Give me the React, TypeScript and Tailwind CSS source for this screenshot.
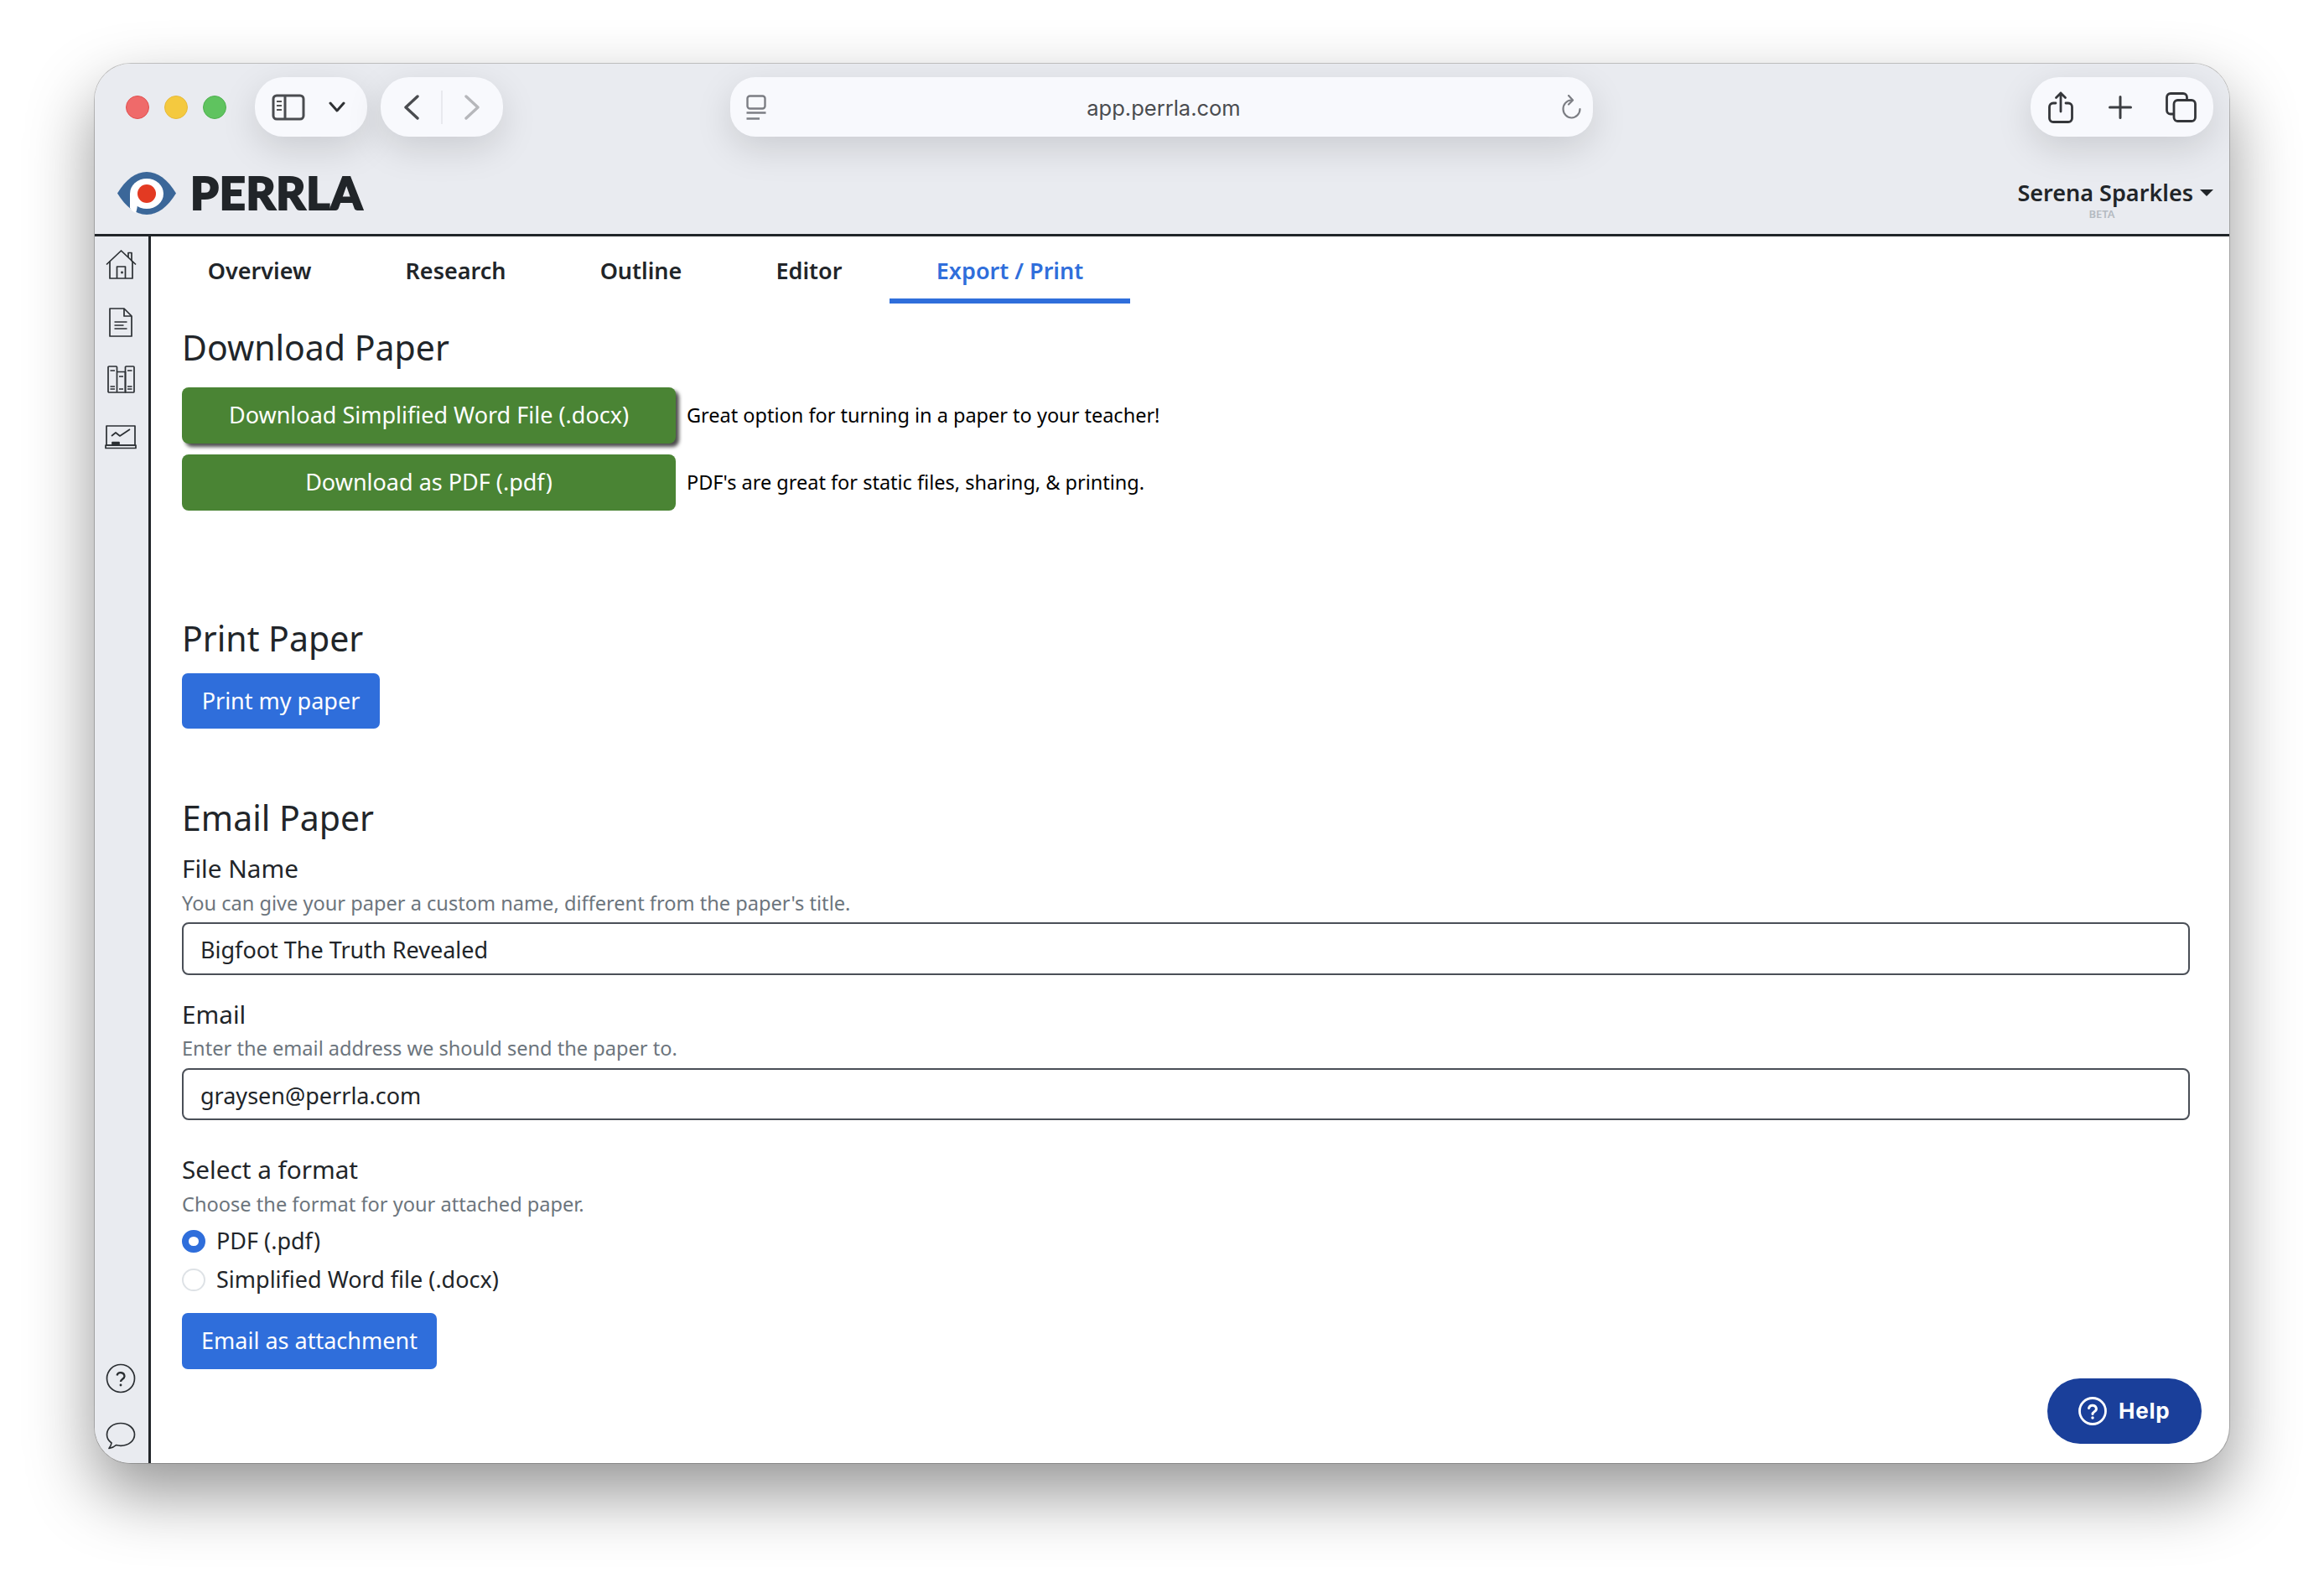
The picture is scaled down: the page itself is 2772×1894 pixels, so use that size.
import React from "react";

const sans = "font-['Noto_Sans','Open_Sans',sans-serif]";

function Dot({ c }: { c: string }) {
  return <div className={`w-[28px] h-[28px] rounded-full ${c}`} />;
}

function SidebarToggle() {
  return (
    <svg width="40" height="32" viewBox="0 0 40 32" fill="none" stroke="#4a4c50" strokeWidth="3">
      <rect x="2" y="2" width="36" height="28" rx="4" />
      <path d="M16 2V30" />
      <path d="M6 9h6M6 14h6M6 19h6" strokeWidth="2" stroke="#555" />
    </svg>
  );
}

function Toolbar() {
  return (
    <div className="flex items-center h-[71px] pl-[37px] mt-[16px]">
      <div className="flex gap-[18px]">
        <Dot c="bg-[#ef6a6a] border border-[#e05050]" />
        <Dot c="bg-[#f4c93f] border border-[#e6b93a]" />
        <Dot c="bg-[#5fc35f] border border-[#4fb04f]" />
      </div>
      <div className="ml-[34px] w-[134px] h-[71px] rounded-[34px] bg-[#f8f9fd] shadow-[0_14px_44px_rgba(0,0,0,0.13)] flex items-center pl-[20px]">
        <SidebarToggle />
        <svg className="ml-[28px]" width="20" height="13" viewBox="0 0 20 13" fill="none" stroke="#2f3134" strokeWidth="3" strokeLinecap="round" strokeLinejoin="round">
          <path d="M2 2l8 9 8-9" />
        </svg>
      </div>
      <div className="ml-[16px] w-[146px] h-[71px] rounded-[34px] bg-[#f8f9fd] shadow-[0_14px_44px_rgba(0,0,0,0.13)] flex items-center pl-[28px]">
        <svg width="18" height="30" viewBox="0 0 18 30" fill="none" stroke="#4a4c50" strokeWidth="3.4" strokeLinecap="round" strokeLinejoin="round">
          <path d="M16 2L2 15l14 13" />
        </svg>
        <div className="ml-[26px] w-[2px] h-[40px] bg-[#e8e9ee]" />
        <svg className="ml-[26px]" width="18" height="30" viewBox="0 0 18 30" fill="none" stroke="#b6b7bb" strokeWidth="3.4" strokeLinecap="round" strokeLinejoin="round">
          <path d="M2 2l14 13L2 28" />
        </svg>
      </div>
      <div className="ml-[271px] w-[1029px] h-[71px] rounded-[30px] bg-[#f8f9fd] shadow-[0_14px_44px_rgba(0,0,0,0.13)] flex items-center justify-between pl-[19px] pr-[14px]">
        <svg width="24" height="30" viewBox="0 0 24 30" fill="none" stroke="#7c7e84" strokeWidth="2.4">
          <rect x="1.5" y="1.5" width="21" height="15" rx="3" />
          <path d="M0.5 21.5H23.5" />
          <path d="M0.5 28.5H16" />
        </svg>
        <span className="font-['Inter',sans-serif] text-[25.5px] text-[#4a4c50] leading-none mt-[3px]">app.perrla.com</span>
        <svg width="24" height="30" viewBox="0 0 24 30" fill="none" stroke="#7c7e84" strokeWidth="2.2" strokeLinecap="round" strokeLinejoin="round">
          <path d="M12 6.500a10 10.500 0 1 0 10.500 10.500" />
          <path d="M9 1l5 5.500-5 5" />
        </svg>
      </div>
      <div className="ml-[522px] w-[218px] h-[71px] rounded-[34px] bg-[#f8f9fd] shadow-[0_14px_44px_rgba(0,0,0,0.13)] flex items-center pl-[21px]">
        <svg width="30" height="38" viewBox="0 0 30 38" fill="none" stroke="#34363a" strokeWidth="2.8" strokeLinecap="round" strokeLinejoin="round">
          <path d="M9 14H6a4.500 4.500 0 0 0-4.500 4.500V32A4.500 4.500 0 0 0 6 36.500h18a4.500 4.500 0 0 0 4.500-4.500V18.500A4.500 4.500 0 0 0 24 14h-3" />
          <path d="M15 24V2M9.500 7.500L15 2l5.500 5.500" />
        </svg>
        <svg className="ml-[42px]" width="28" height="28" viewBox="0 0 28 28" fill="none" stroke="#3c3e42" strokeWidth="3" strokeLinecap="round">
          <path d="M14 1.500V26.500M1.500 14H26.500" />
        </svg>
        <svg className="ml-[40px]" width="37" height="36" viewBox="0 0 37 36" fill="none" stroke="#34363a" strokeWidth="2.8">
          <path d="M9 26H6a4.500 4.500 0 0 1-4.500-4.500V6A4.500 4.500 0 0 1 6 1.500h15A4.500 4.500 0 0 1 25.500 6v3" />
          <rect x="10" y="9.500" width="25.500" height="25" rx="4.500" />
        </svg>
      </div>
    </div>
  );
}

function Logo() {
  return (
    <div className="flex items-center">
      <svg width="70" height="51" viewBox="0 0 70 51">
        <path d="M0 25.500C10 9 22 0 35 0s25 9 35 25.500C60 42 48 51 35 51S10 42 0 25.500Z" fill="#3b6799" />
        <ellipse cx="35" cy="26" rx="20" ry="18" fill="#fff" />
        <path d="M15 26h9v10c0 6-1 10-2 13-4-2-5-3-7-6Z" fill="#fff" />
        <circle cx="35" cy="26" r="11" fill="#e33a22" />
      </svg>
      <span className="ml-[17px] font-['Lato',sans-serif] font-black text-[54px] leading-none text-[#212529] tracking-[0.8px] [-webkit-text-stroke:2px_#212529]">PERRLA</span>
    </div>
  );
}

function Nav() {
  const items: { label: string; w: string; on?: boolean }[] = [
    { label: "Overview", w: "w-[235px]" },
    { label: "Research", w: "w-[233px]" },
    { label: "Outline", w: "w-[209px]" },
    { label: "Editor", w: "w-[192px]" },
    { label: "Export / Print", w: "w-[287px]", on: true },
  ];
  return (
    <div className="flex h-[80px] pl-[12px]">
      {items.map((t) => (
        <div
          key={t.label}
          className={`${t.w} flex items-center justify-center pt-[7px] text-[27px] font-semibold leading-none border-b-[6px] ${
            t.on ? "text-[#2f6edb] border-[#2f6edb]" : "text-[#212529] border-transparent"
          }`}
        >
          {t.label}
        </div>
      ))}
    </div>
  );
}

function GreenRow({ label, note, shadow, top }: { label: string; note: string; shadow?: boolean; top?: string }) {
  return (
    <div className={`flex items-center ${top ?? ""}`}>
      <button
        className={`w-[589px] h-[67px] rounded-[8px] bg-[#4a8434] text-white text-[27px] leading-none pb-[3px] ${
          shadow ? "shadow-[4px_4px_4px_rgba(0,0,0,0.7)]" : ""
        }`}
      >
        {label}
      </button>
      <span className="ml-[13px] text-[23.5px] text-black leading-none">{note}</span>
    </div>
  );
}

function H({ children, top }: { children: React.ReactNode; top: string }) {
  return <h4 className={`text-[41px] leading-[48px] text-[#212529] ${top}`}>{children}</h4>;
}

function Label({ children, top }: { children: React.ReactNode; top: string }) {
  return <div className={`text-[29.7px] leading-[40px] text-[#212529] ${top}`}>{children}</div>;
}

function Hint({ children, top }: { children: React.ReactNode; top: string }) {
  return <div className={`text-[23.6px] leading-[34px] text-[#6c757d] ${top}`}>{children}</div>;
}

function Field({ value, top, h }: { value: string; top: string; h: string }) {
  return (
    <input
      readOnly
      value={value}
      className={`block w-[2395px] ${h} ${top} border-[2.5px] border-[#4a4f57] rounded-[8px] pl-[20px] pt-[2px] text-[27px] text-[#212529] bg-white outline-none`}
    />
  );
}

function BlueBtn({ children, cls }: { children: React.ReactNode; cls: string }) {
  return (
    <button className={`block rounded-[7px] bg-[#2f6edb] text-white text-[27px] leading-none pb-[2px] ${cls}`}>{children}</button>
  );
}

function Radio({ on, label, top }: { on?: boolean; label: string; top: string }) {
  return (
    <div className={`flex items-center h-[27px] ${top}`}>
      <div
        className={`w-[28px] h-[27px] rounded-full bg-white ${
          on ? "border-[8px] border-[#2f6edb]" : "border-[2px] border-[#dee2e6]"
        }`}
      />
      <span className="ml-[13px] pb-[3px] text-[27px] leading-none text-[#212529]">{label}</span>
    </div>
  );
}

function Side() {
  const s = { fill: "none", stroke: "#2b2f33", strokeWidth: 1.7, strokeLinejoin: "round" as const };
  return (
    <div className="w-[67px] shrink-0 bg-[#e9ebf0] border-r-[3px] border-[#212529] flex flex-col items-center pt-[16px] pr-[2px] h-full">
      <svg width="37" height="35" viewBox="0 0 37 35" {...s}>
        <path d="M1 17.500L18.500 1 36 17.500" />
        <path d="M27 9V3.500h4V13.500" />
        <path d="M5 13.500V34h27V13.500" />
        <path d="M13.500 34V20H23.500V34" />
        <circle cx="19.500" cy="27" r="0.6" fill="#2b2f33" />
      </svg>
      <svg className="mt-[34px]" width="28" height="35" viewBox="0 0 28 35" {...s}>
        <path d="M1 1H18L27 10V34H1Z" />
        <path d="M18 1V10H27" />
        <path d="M6.500 17H21.500M6.500 21H17.500M6.500 25H21.500" />
      </svg>
      <svg className="mt-[34px]" width="33" height="33" viewBox="0 0 33 33" {...s}>
        <rect x="1" y="1" width="10.500" height="31" rx="1" />
        <path d="M11.500 7.500H21.500V32H11.500" />
        <rect x="21.500" y="1" width="10.500" height="31" rx="1" />
        <path d="M3.500 6H9M3.500 25H9M3.500 28H9M14 13H19M14 28H19M24 6H29.500M24 25H29.500M24 28H29.500" />
      </svg>
      <svg className="mt-[38px]" width="38" height="29" viewBox="0 0 38 29" {...s}>
        <rect x="2" y="1" width="34" height="23" />
        <rect x="1" y="24" width="36" height="3.500" />
        <path d="M8 13l5-4 5 4 12-8" />
        <rect x="9" y="20.500" width="8" height="3.500" fill="#2b2f33" />
      </svg>
      <div className="grow" />
      <svg width="36" height="36" viewBox="0 0 36 36" {...s}>
        <circle cx="18" cy="18" r="16.500" />
        <path d="M13.500 14.500a4.600 4.600 0 0 1 9 1c0 3-4.500 3.500-4.500 6.500" strokeWidth="2.300" />
        <circle cx="18" cy="26" r="0.700" fill="#2b2f33" strokeWidth="1.500" />
      </svg>
      <svg className="mt-[34px] mb-[15px]" width="36" height="34" viewBox="0 0 36 34" {...s}>
        <path d="M18 1.500C8.500 1.500 1.500 7.500 1.500 15c0 4 2 7.500 5.500 10-.3 2.500-1.500 4.500-3 6.500 3.500-.5 6.500-2 8.500-4 2 .5 3.500.8 5.500.8 9.500 0 16.500-6 16.500-13.300S27.500 1.500 18 1.500Z" />
      </svg>
    </div>
  );
}

export default function App() {
  return (
    <div className={`w-[2772px] h-[1894px] bg-white overflow-hidden pt-[76px] pl-[113px] ${sans}`}>
      <div className="relative w-[2546px] h-[1669px] rounded-[43px] bg-white shadow-[0_0_0_1px_rgba(0,0,0,0.2),0_36px_80px_rgba(0,0,0,0.42)] flex flex-col overflow-hidden">
        <header className="h-[206px] shrink-0 bg-[#e9ebf0] border-b-[3px] border-[#212529] flex flex-col">
          <Toolbar />
          <div className="flex items-start justify-between mt-[40px] pl-[27px] pr-[19px]">
            <Logo />
            <div className="flex flex-col">
              <div className="flex items-center text-[27px] font-semibold leading-none text-[#212529] mt-[13px]">
                Serena Sparkles
                <span className="ml-[8px] w-0 h-0 border-x-[8px] border-x-transparent border-t-[8px] border-t-[#212529]" />
              </div>
              <span className="ml-[85px] mt-[6px] text-[13px] font-semibold leading-none text-[#b4bac1]">BETA</span>
            </div>
          </div>
        </header>
        <div className="flex grow min-h-0">
          <Side />
          <main className="grow">
            <Nav />
            <div className="ml-[37px]">
              <H top="mt-[28px] mb-[24px]">Download Paper</H>
              <GreenRow shadow label="Download Simplified Word File (.docx)" note="Great option for turning in a paper to your teacher!" />
              <GreenRow top="mt-[13px]" label="Download as PDF (.pdf)" note="PDF's are great for static files, sharing, & printing." />
              <H top="mt-[128px]">Print Paper</H>
              <BlueBtn cls="mt-[18px] w-[236px] h-[66px]">Print my paper</BlueBtn>
              <H top="mt-[82px]">Email Paper</H>
              <Label top="mt-[17px]">File Name</Label>
              <Hint top="mt-[4px]">You can give your paper a custom name, different from the paper's title.</Hint>
              <Field top="mt-[6px]" h="h-[63px]" value="Bigfoot The Truth Revealed" />
              <Label top="mt-[27px]">Email</Label>
              <Hint top="mt-[3px]">Enter the email address we should send the paper to.</Hint>
              <Field top="mt-[7px]" h="h-[62px]" value="graysen@perrla.com" />
              <Label top="mt-[39px]">Select a format</Label>
              <Hint top="mt-[4px]">Choose the format for your attached paper.</Hint>
              <Radio on top="mt-[14px]" label="PDF (.pdf)" />
              <Radio top="mt-[19px]" label="Simplified Word file (.docx)" />
              <BlueBtn cls="mt-[26px] w-[304px] h-[67px]">Email as attachment</BlueBtn>
            </div>
          </main>
        </div>
        <button className="absolute left-[2329px] top-[1568px] w-[184px] h-[78px] rounded-[39px] bg-[#1a3f9a] flex items-center pl-[37px] text-white">
          <svg width="34" height="34" viewBox="0 0 34 34" fill="none" stroke="#fff" strokeWidth="2.800" strokeLinecap="round">
            <circle cx="17" cy="17" r="15.500" />
            <path d="M12.500 13.500a4.600 4.600 0 0 1 9 1c0 3-4.500 3.200-4.500 6" strokeWidth="3" />
            <circle cx="17" cy="25" r="1" fill="#fff" strokeWidth="1.500" />
          </svg>
          <span className="ml-[14px] font-['Inter',sans-serif] font-bold text-[26px] tracking-[0.8px] leading-none">Help</span>
        </button>
      </div>
    </div>
  );
}
